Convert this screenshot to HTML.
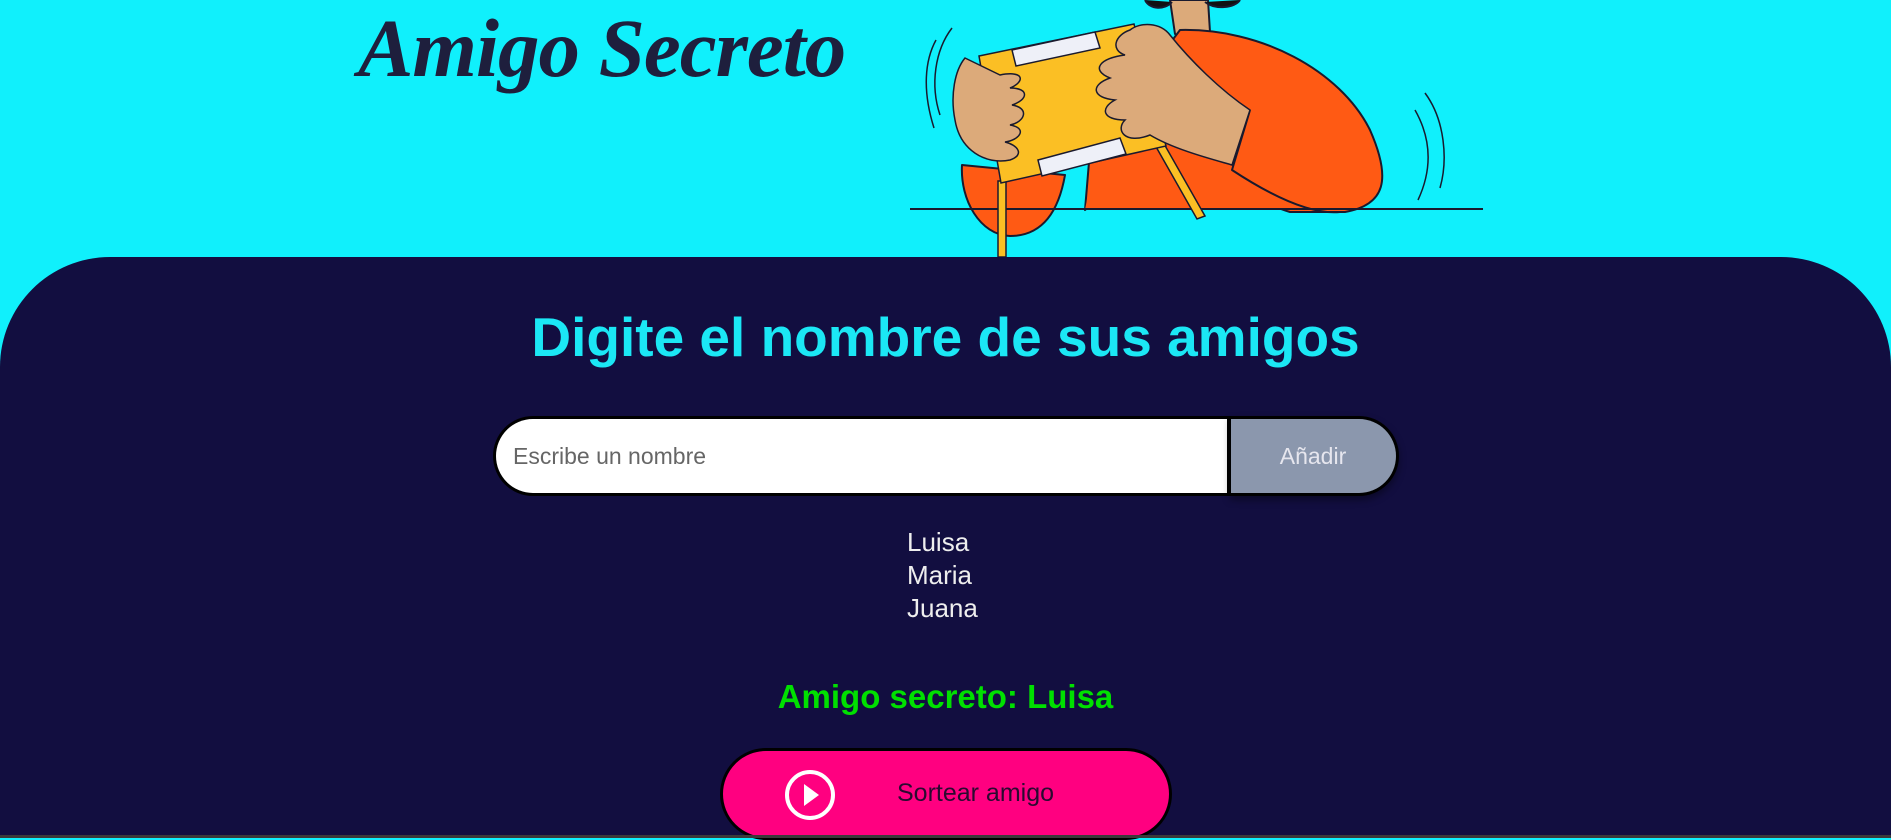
<!DOCTYPE html>
<html><head><meta charset="utf-8"><style>
html,body{margin:0;padding:0;width:1891px;height:838px;overflow:hidden;background:#10f0fc;font-family:"Liberation Sans",sans-serif}
.title{position:absolute;left:358px;top:0px;font-family:"Liberation Serif",serif;font-style:italic;font-weight:bold;font-size:83px;color:#1e1f3d;letter-spacing:-1px;margin:0}
.art{position:absolute;left:0;top:0}
.main{position:absolute;left:0;top:257px;width:1891px;height:581px;background:#120e40;border-radius:110px 110px 0 0}
h2{position:absolute;left:0;width:1891px;top:305px;margin:0;text-align:center;color:#1be7f5;font-size:55px;font-weight:bold}
.inp{position:absolute;left:493px;top:416px;width:734px;height:80px;box-sizing:border-box;border:3px solid #000;border-right:none;border-radius:40px 0 0 40px;background:#fff;font-size:23px;color:#666;line-height:74px;padding-left:17px}
.add{position:absolute;left:1230px;top:416px;width:169px;height:80px;box-sizing:border-box;border:3px solid #000;border-left:none;border-radius:0 40px 40px 0;background:#8b97ad;color:#e6e6ee;font-size:23px;line-height:74px;text-align:center;box-shadow:0 4px 8px rgba(0,0,0,.4)}
.add:before{content:"";position:absolute;left:-3px;top:-3px;width:4px;height:80px;background:#000}
.list{position:absolute;left:907px;top:526px;color:#eee;font-size:26px;line-height:33px}
.res{position:absolute;left:0;width:1891px;top:678px;text-align:center;color:#00e000;font-size:33px;font-weight:bold}
.sort{position:absolute;left:720px;top:748px;width:452px;height:92px;box-sizing:border-box;border:3px solid #000;border-radius:46px;background:#ff0080}
.sort span{position:absolute;left:174px;top:28px;font-size:25px;color:#2a0a30}
.bar{position:absolute;left:0;top:835px;width:1891px;height:3px;background:#3a3a3a}
</style></head><body>
<svg class="art" width="1891" height="838" viewBox="0 0 1891 838">
<g stroke="#1a1a2e" stroke-width="2" stroke-linejoin="round">
<path d="M1170,0 L1175,34 C1190,42 1205,40 1210,32 L1208,0Z" fill="#dcaa7a"/>
<path d="M1145,0 C1150,10 1165,10 1172,2 M1205,2 C1215,10 1235,8 1240,0" fill="#111" />
<path d="M1180,30 C1260,28 1340,70 1370,130 C1392,180 1385,205 1345,212 L1290,212 C1250,200 1225,180 1232,130 L1200,118 L1085,210 L1090,150 Z" fill="#ff5a14"/>
<path d="M1085,210 L1100,130 L1300,120 L1290,210 Z" fill="#ff5a14" stroke="none"/>
<path d="M962,165 C960,200 980,235 1010,236 C1040,236 1058,215 1065,175 Z" fill="#ff5a14"/>
<path d="M1250,110 L1232,170 C1270,195 1310,215 1340,212" fill="none"/>
</g>
<line x1="910" y1="209" x2="1483" y2="209" stroke="#1a1a2e" stroke-width="2"/>
<g stroke="#1a1a2e" stroke-width="1.5">
<path d="M998,181 L1006,181 L1006,257 L998,257Z" fill="#fbbf24"/>
<path d="M1155,145 L1163,142 L1205,216 L1197,219Z" fill="#fbbf24"/>
<path d="M979,56 L1134,24 L1166,146 L1001,183 Z" fill="#fbbf24"/>
<path d="M1012,50 L1095,32 L1100,48 L1016,66Z" fill="#eef0f8"/>
<path d="M1038,160 L1120,138 L1126,154 L1042,176Z" fill="#eef0f8"/>
<path d="M965,58 C955,70 950,95 955,120 C960,150 985,165 1010,160 C1025,155 1018,145 1005,142 C1020,140 1028,128 1010,125 C1025,122 1030,108 1012,105 C1028,100 1030,88 1010,88 C1025,82 1025,70 1000,75 Z" fill="#dcaa7a"/>
<path d="M1130,30 C1115,35 1110,50 1125,55 C1100,58 1090,70 1110,78 C1090,85 1092,98 1115,100 C1100,108 1102,120 1125,120 C1115,130 1125,145 1150,135 C1175,150 1215,160 1232,165 L1250,110 C1220,90 1190,60 1170,35 C1160,22 1140,22 1130,30Z" fill="#dcaa7a"/>
</g>
<g fill="none" stroke="#1a1a2e" stroke-width="1.5">
<path d="M936,40 C925,60 922,90 934,128"/><path d="M952,28 C935,50 930,85 940,115"/>
<path d="M1415,110 C1432,140 1432,170 1418,200"/><path d="M1425,93 C1445,120 1448,160 1440,188"/>
</g>
</svg>
<h1 class="title">Amigo Secreto</h1>
<div class="main"></div>
<h2>Digite el nombre de sus amigos</h2>
<div class="inp">Escribe un nombre</div>
<div class="add">Añadir</div>
<div class="list">Luisa<br>Maria<br>Juana</div>
<div class="res">Amigo secreto: Luisa</div>
<div class="sort">
<svg style="position:absolute;left:60px;top:17px" width="54" height="54" viewBox="0 0 54 54"><circle cx="27" cy="27" r="23" fill="none" stroke="#fff" stroke-width="4"/><path d="M21,16 L36,27 L21,38Z" fill="#fff"/></svg>
<span>Sortear amigo</span></div>
<div class="bar"></div>
</body></html>
